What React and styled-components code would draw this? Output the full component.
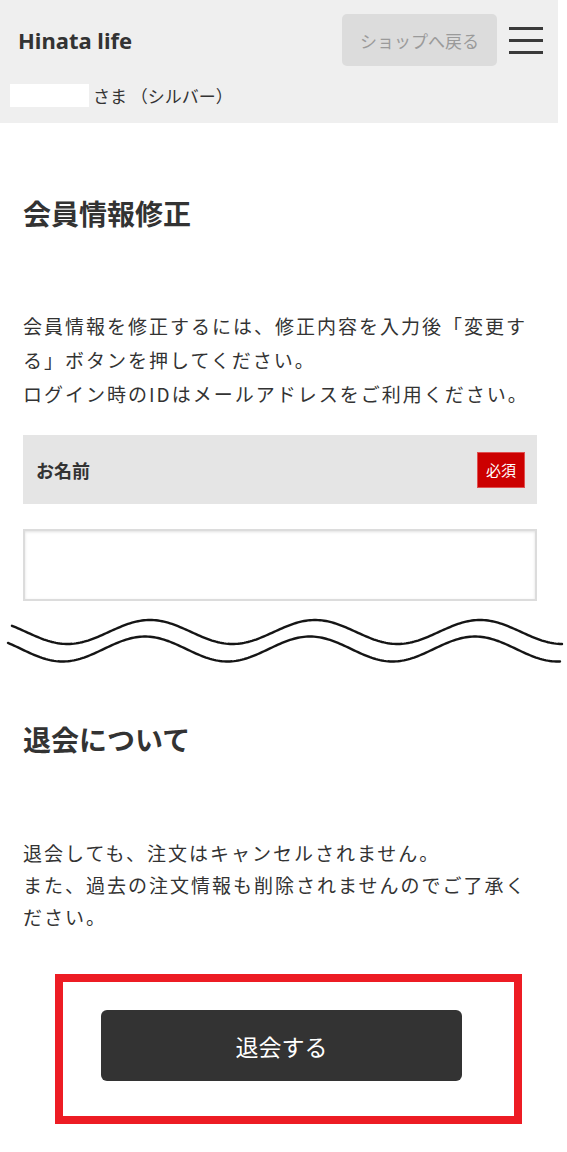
import React from "react";
import styled, { createGlobalStyle } from "styled-components";

const GlobalStyle = createGlobalStyle`
  body {
    margin: 0;
    background: #ffffff;
    font-family: "Noto Sans CJK JP", "Noto Sans", sans-serif;
    color: #333333;
  }
`;

const Page = styled.div`
  width: 558px;
`;

const Header = styled.header`
  background-color: #efefef;
  padding: 14px 15px 16px 10px;
`;

const TopRow = styled.div`
  display: flex;
  align-items: center;
  height: 52px;
`;

const Brand = styled.div`
  flex: 1;
  padding-left: 8px;
  font-family: "Noto Sans", "Noto Sans CJK JP", sans-serif;
  font-weight: 700;
  font-size: 22px;
  color: #333;
`;

const ShopButton = styled.button`
  height: 52px;
  width: 155px;
  border: none;
  border-radius: 5px;
  background-color: #dcdcdc;
  color: #9a9a9a;
  font-family: "Noto Sans CJK JP", sans-serif;
  font-size: 17px;
  padding: 0;
`;

const Burger = styled.div`
  margin-left: 12px;
  width: 34px;
  display: flex;
  flex-direction: column;
  gap: 9px;
  & span {
    display: block;
    height: 3px;
    background: #3a3a3a;
  }
`;

const SubRow = styled.div`
  display: flex;
  align-items: center;
  height: 23px;
  margin-top: 18px;
  font-size: 17px;
  line-height: 23px;
  color: #333;
`;

const NameMask = styled.span`
  display: inline-block;
  width: 79px;
  height: 23px;
  background: #ffffff;
  margin-right: 4px;
`;

const Content = styled.main`
  padding: 0 21px 0 23px;
`;

const Heading = styled.h2`
  margin: ${(p) => p.$top}px 0 0;
  font-size: 28px;
  line-height: 40px;
  font-weight: 700;
  color: #333;
`;

const Text = styled.p`
  margin: ${(p) => p.$top}px 0 0;
  font-size: 19px;
  letter-spacing: 2px;
  line-height: ${(p) => p.$lh}px;
  color: #333;
`;

const LabelBar = styled.div`
  margin-top: 24px;
  height: 69px;
  background: #e5e5e5;
  display: flex;
  align-items: center;
  justify-content: space-between;
  padding: 0 12px 0 13px;
  box-sizing: border-box;
`;

const LabelText = styled.span`
  font-size: 18px;
  font-weight: 700;
  color: #333;
`;

const Required = styled.span`
  width: 48px;
  height: 36px;
  box-sizing: border-box;
  border: 1px solid #e05050;
  background: #cc0000;
  color: #fff;
  font-size: 15px;
  display: flex;
  align-items: center;
  justify-content: center;
`;

const Field = styled.input`
  display: block;
  margin-top: 25px;
  width: 100%;
  height: 72px;
  box-sizing: border-box;
  border: 2px solid #dcdcdc;
  box-shadow: inset 0 1px 3px rgba(0, 0, 0, 0.12);
  background: #fff;
  font-size: 18px;
  outline: none;
`;

const WaveSvg = styled.svg`
  display: block;
  margin: 9px 0 0 -23px;
  width: 567px;
  height: 60px;
`;

const Frame = styled.div`
  margin: 41px 0 0 32px;
  width: 467px;
  border: 8px solid #ed1c24;
  box-sizing: border-box;
  padding: 28px 0 35px 38px;
`;

const LeaveButton = styled.button`
  display: flex;
  align-items: center;
  justify-content: center;
  width: 361px;
  height: 71px;
  border: none;
  border-radius: 6px;
  background: #333333;
  color: #ffffff;
  font-family: "Noto Sans CJK JP", sans-serif;
  font-size: 23px;
  padding: 0;
`;

function wave(x0, x1, mid, amp, phase) {
  const pts = [];
  for (let x = x0; x <= x1; x += 2) {
    const y = mid - amp * Math.cos((2 * Math.PI * (x - phase)) / 165);
    pts.push(`${x},${y.toFixed(2)}`);
  }
  return "M" + pts.join(" L");
}

function Wave() {
  return (
    <WaveSvg viewBox="0 0 567 60">
      <path d={wave(12, 563, 22, 12, 150)} fill="none" stroke="#151515" strokeWidth="2.4" strokeLinecap="round" />
      <path d={wave(8, 560, 39, 12.5, 145)} fill="none" stroke="#151515" strokeWidth="2.4" strokeLinecap="round" />
    </WaveSvg>
  );
}

export default function App() {
  return (
    <Page>
      <GlobalStyle />
      <Header>
        <TopRow>
          <Brand>Hinata life</Brand>
          <ShopButton>ショップへ戻る</ShopButton>
          <Burger>
            <span />
            <span />
            <span />
          </Burger>
        </TopRow>
        <SubRow>
          <NameMask />
          さま （シルバー）
        </SubRow>
      </Header>
      <Content>
        <Heading $top={70}>会員情報修正</Heading>
        <Text $top={76} $lh={34}>
          会員情報を修正するには、修正内容を入力後「変更する」ボタンを押してください。
          <br />
          ログイン時のIDはメールアドレスをご利用ください。
        </Text>
        <LabelBar>
          <LabelText>お名前</LabelText>
          <Required>必須</Required>
        </LabelBar>
        <Field type="text" />
        <Wave />
        <Heading $top={49}>退会について</Heading>
        <Text $top={78} $lh={32}>
          退会しても、注文はキャンセルされません。
          <br />
          また、過去の注文情報も削除されませんのでご了承ください。
        </Text>
        <Frame>
          <LeaveButton>退会する</LeaveButton>
        </Frame>
      </Content>
    </Page>
  );
}
